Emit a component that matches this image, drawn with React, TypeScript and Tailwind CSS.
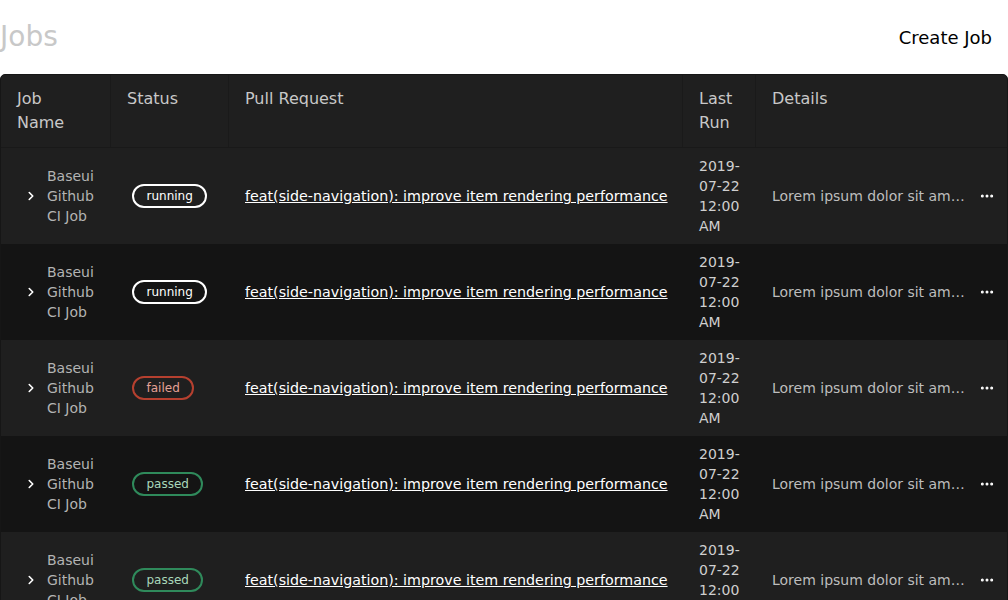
import React from 'react';
import { ChevronRight, Ellipsis } from 'lucide-react';

type Status = 'running' | 'failed' | 'passed';

const jobs: { name: string; status: Status }[] = [
  { name: 'Baseui Github CI Job', status: 'running' },
  { name: 'Baseui Github CI Job', status: 'running' },
  { name: 'Baseui Github CI Job', status: 'failed' },
  { name: 'Baseui Github CI Job', status: 'passed' },
  { name: 'Baseui Github CI Job', status: 'passed' },
  { name: 'Baseui Github CI Job', status: 'passed' },
];

const cols = 'grid grid-cols-[109px_118px_454px_73px_1fr]';

function StatusBadge({ status }: { status: Status }) {
  const styles: Record<Status, string> = {
    running: 'border-white text-white',
    failed: 'border-[#b6402f] text-[#e5a196]',
    passed: 'border-[#2f8a5b] text-[#a9d7ba]',
  };
  return (
    <span className={`inline-flex items-center h-6 px-[12.5px] rounded-full border-2 text-[12px] leading-none ${styles[status]}`}>
      {status}
    </span>
  );
}

export default function App() {
  return (
    <div className="min-h-screen bg-white font-['DejaVu_Sans',sans-serif]">
      {/* Page header */}
      <header className="h-[74px] flex items-center justify-between">
        <h1 className="text-[28px] leading-none text-[#c8c8c8] font-normal">Jobs</h1>
        <button className="px-4 text-[18px] text-black">Create Job</button>
      </header>

      {/* Jobs table */}
      <div className="border border-[#161616] rounded-t-[5px] overflow-hidden bg-[#1f1f1f]">
        <div className={`${cols} h-[73px] text-[16px] leading-6 text-[#c8c8c8] border-b border-[#191919]`}>
          <div className="pl-4 pr-[22px] pt-3">Job Name</div>
          <div className="pl-4 pr-3 pt-3 border-l border-[#1a1a1a]">Status</div>
          <div className="pl-4 pr-3 pt-3 border-l border-[#1a1a1a]">Pull Request</div>
          <div className="pl-4 pr-2 pt-3 border-l border-[#1a1a1a]">Last Run</div>
          <div className="pl-4 pr-3 pt-3 border-l border-[#1a1a1a]">Details</div>
        </div>

        {jobs.map((job, i) => (
          <div
            key={i}
            className={`${cols} h-[96px] text-[14px] leading-5 ${i % 2 === 0 ? 'bg-[#1f1f1f]' : 'bg-[#141414]'}`}
          >
            <div className="flex items-center gap-[9px] pl-[23px] pr-[10px]">
              <ChevronRight className="w-[14px] h-[14px] shrink-0 text-white" strokeWidth={2.75} />
              <span className="text-[#b3b3b3]">{job.name}</span>
            </div>
            <div className="flex items-center pl-[21px] border-l border-transparent">
              <StatusBadge status={job.status} />
            </div>
            <div className="flex items-center pl-4 border-l border-transparent">
              <a href="#" className="text-white text-[14.25px] underline whitespace-nowrap">
                feat(side-navigation): improve item rendering performance
              </a>
            </div>
            <div className="flex items-center pl-4 pr-2 border-l border-transparent text-[#cfcfcf]">
              2019-07-22 12:00 AM
            </div>
            <div className="flex items-center gap-[10px] pl-4 pr-[12px] border-l border-transparent min-w-0">
              <span className="flex-1 truncate text-[#bdbdbd]">
                Lorem ipsum dolor sit amet, consectetur adipiscing elit
              </span>
              <Ellipsis className="w-4 h-4 shrink-0 text-white" strokeWidth={2.5} />
            </div>
          </div>
        ))}
      </div>
    </div>
  );
}
